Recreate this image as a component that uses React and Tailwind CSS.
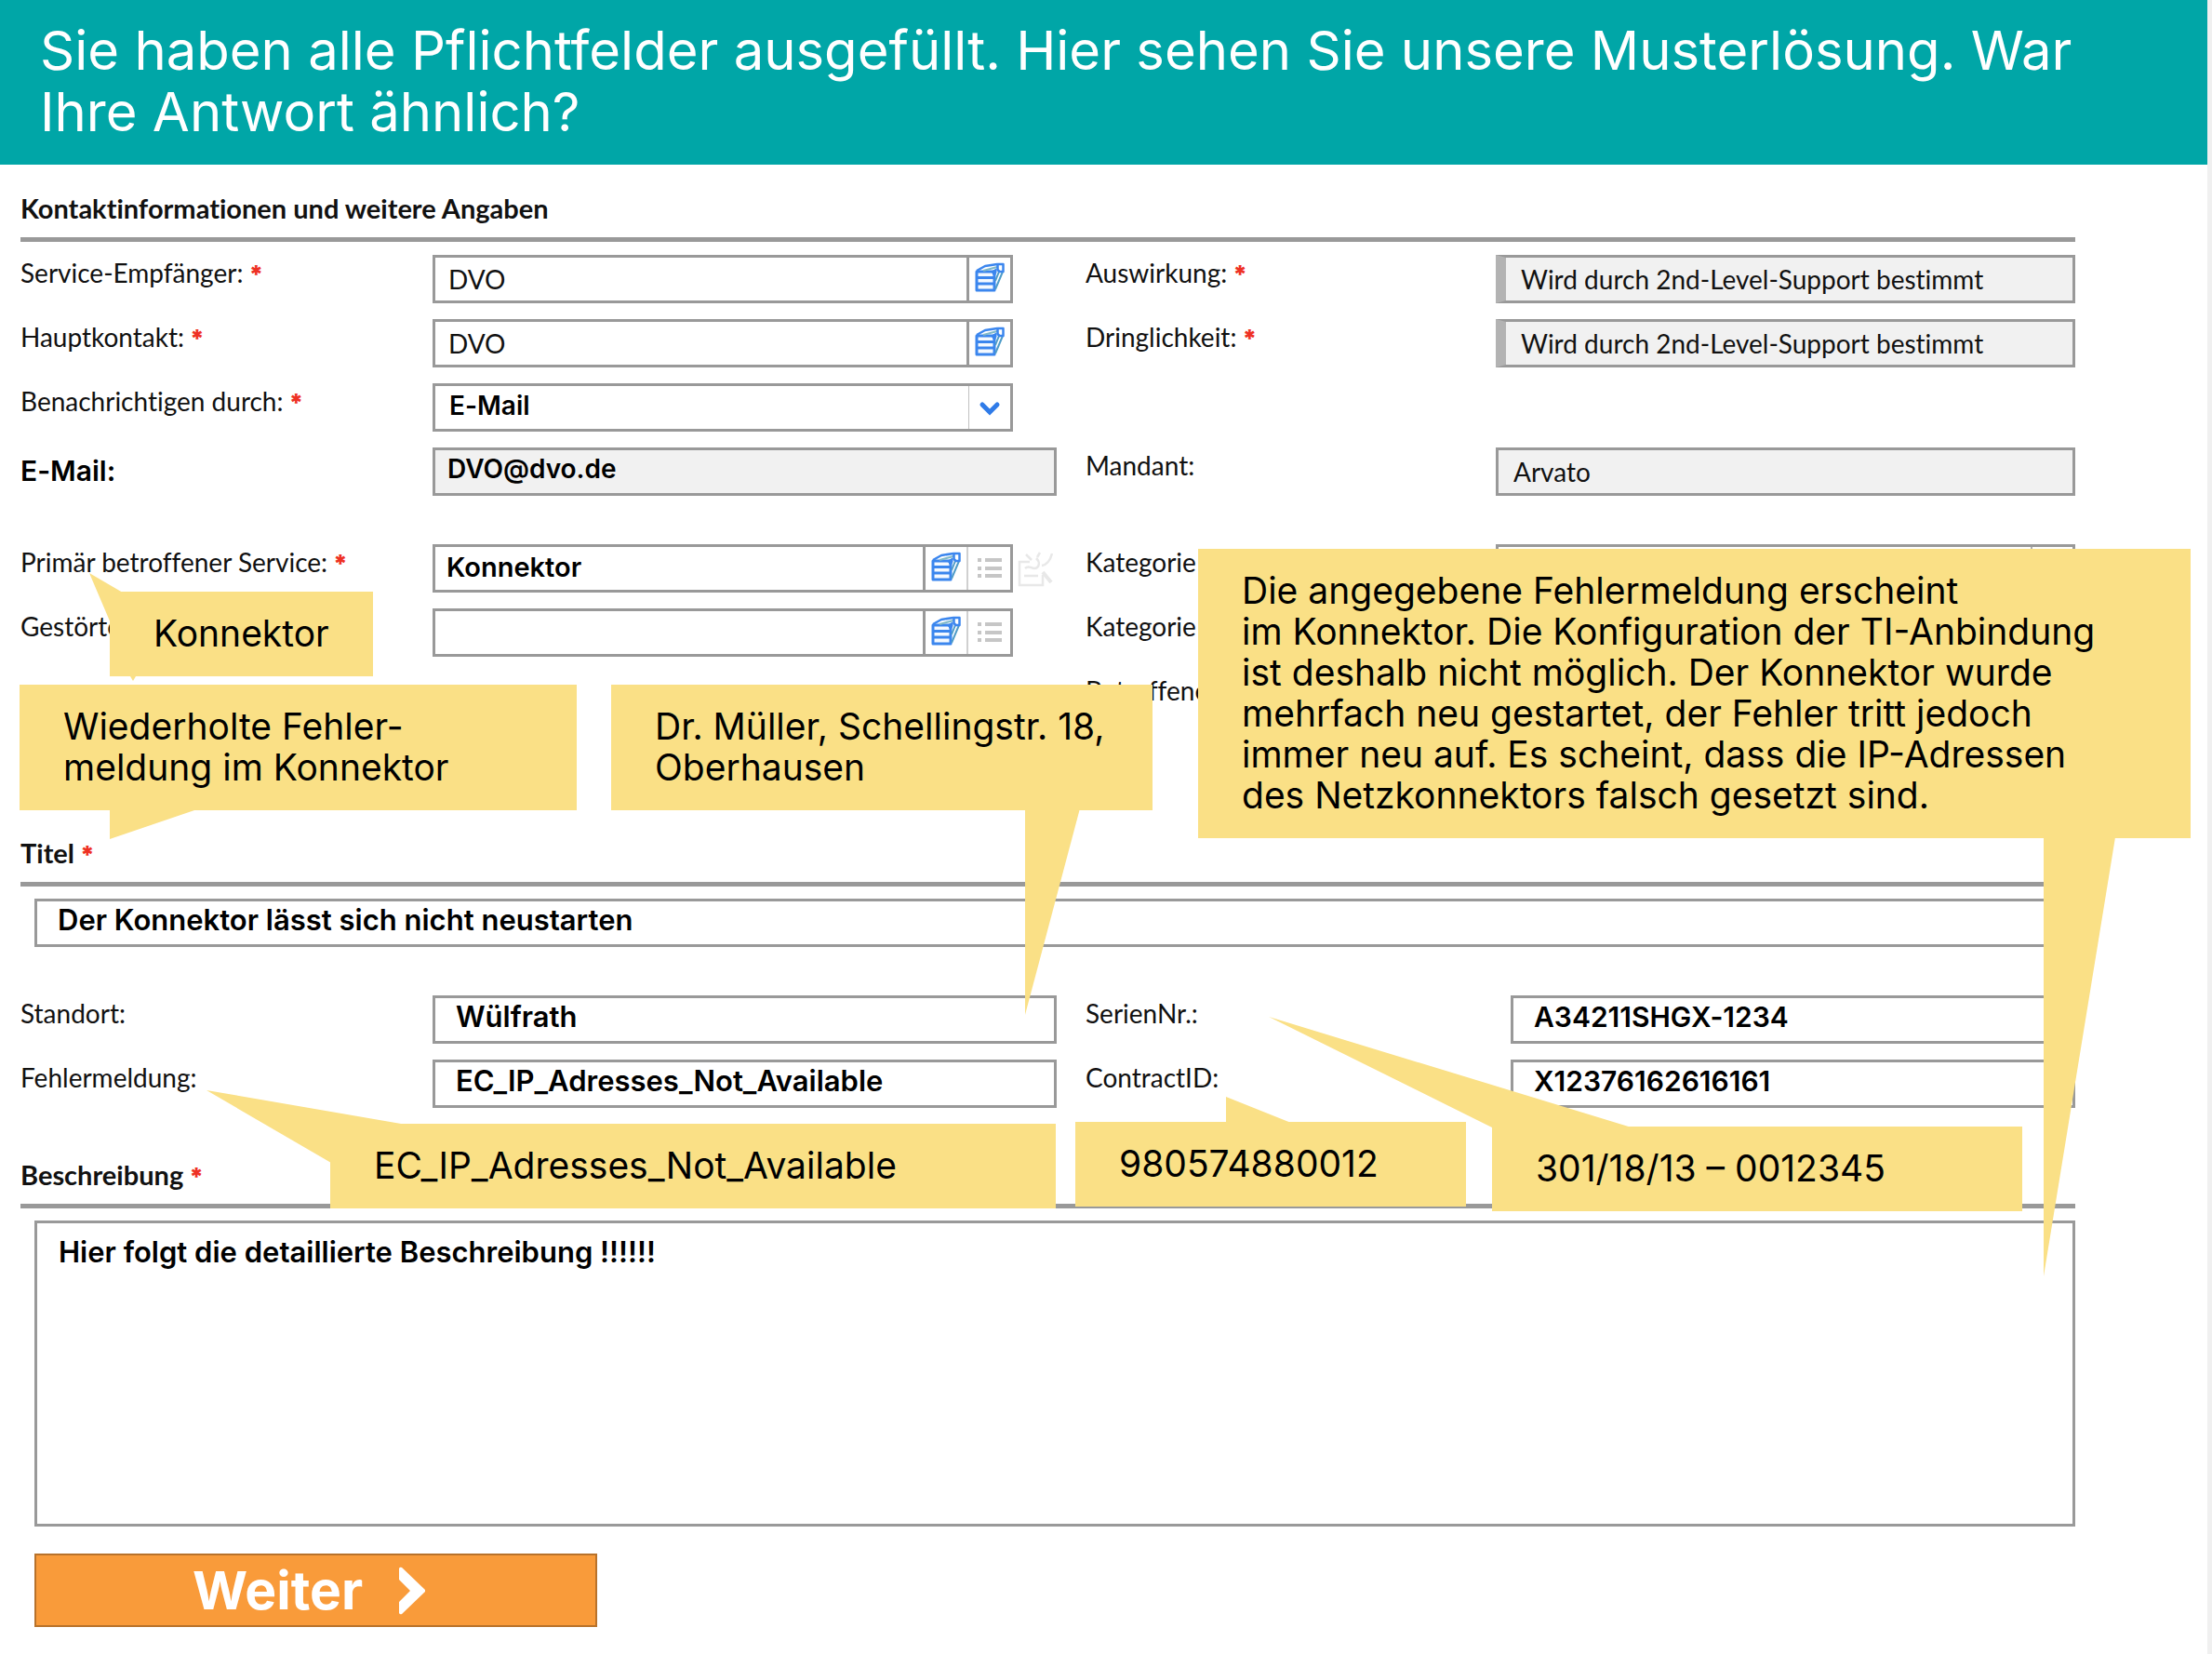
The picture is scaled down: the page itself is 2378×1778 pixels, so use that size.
import React from "react";

const FORM_FONT = "font-['Lato',sans-serif] [font-variant-ligatures:none]";
const VALUE_FONT = "font-['Inter',sans-serif] font-semibold";

function StackIcon() {
  return (
    <svg width="32" height="32" viewBox="0 0 32 32" fill="none" stroke="#3b86ee" strokeWidth="3" strokeLinejoin="round" aria-hidden="true">
      <path d="M2 10h19v20H2z" fill="#f4f9ff" />
      <path d="M2 16.500h19M2 23h19" />
      <path d="M2 9l9-5 13-2" strokeWidth="2.500" />
      <path d="M9 9l15-4" stroke="#7fb8c8" strokeWidth="2" />
      <path d="M22 29l8-19M22 20l4-10" stroke="#4f9cc8" strokeWidth="2" />
      <path d="M24.500 2h6v8h-4l-2-2z" strokeWidth="2.500" />
      <path d="M18 10l5-3v4l-2 4z" fill="#3b86ee" strokeWidth="1" />
    </svg>
  );
}

function ListIcon() {
  return (
    <svg width="26" height="22" viewBox="0 0 26 22" fill="#c6c6c6" aria-hidden="true">
      <path d="M0 0h4v4H0zM8 0h18v4H8zM0 9h4v4H0zM8 9h18v4H8zM0 17h4v4H0zM8 17h18v4H8z" />
    </svg>
  );
}

function EditIcon() {
  return (
    <svg width="38" height="38" viewBox="0 0 38 38" fill="none" stroke="#e8e8e8" strokeWidth="2.500" aria-hidden="true">
      <path d="M13 11H2v25h25V25M7 26h15" />
      <path d="M8 18c5-5 8 3 13-1 3-3 2-7-1-10M9 3l6 6M24 1l-3 5M26 15c6-1 9-5 11-13" />
      <path d="M27 22l9 11" strokeWidth="4" />
    </svg>
  );
}

function Star() {
  return <span className="ml-1.5 font-['Inter',sans-serif] text-[26px] font-black leading-none text-[#ee3124]">*</span>;
}

function Label({ htmlFor, required, right, strong, children }) {
  return (
    <label
      htmlFor={htmlFor}
      className={`${right ? "pl-[31px]" : ""} ${
        strong ? `${VALUE_FONT} pt-2 text-[30px] text-black` : "pt-0.5 text-[28px] text-[#111111]"
      } whitespace-nowrap leading-[34px]`}
    >
      {children}
      {required && <Star />}
    </label>
  );
}

function Row({ children }) {
  return <div className="grid h-[69px] grid-cols-[443fr_671fr_472fr_623fr] items-start">{children}</div>;
}

const BOX = "flex h-[52px] min-w-0 flex-1 items-stretch border-[3px] border-[#999999]";

function Lookup({ id, value, list, edit, form }) {
  return (
    <div className="flex">
      <div className={`${BOX} bg-white`}>
        <input
          id={id}
          defaultValue={value}
          className={`min-w-0 flex-1 bg-transparent outline-none ${
            form ? "pl-3.5 text-[28px] text-[#111111]" : `${VALUE_FONT} pb-0.5 pl-3 text-[29px] text-black`
          }`}
        />
        <button type="button" aria-label="Auswählen" className="flex w-[47px] items-center justify-center border-l-[3px] border-[#999999] pb-1">
          <StackIcon />
        </button>
        {list && (
          <button type="button" aria-label="Liste" className="flex w-[47px] items-center justify-center border-l-2 border-[#d0d0d0]">
            <ListIcon />
          </button>
        )}
      </div>
      <div className="flex w-[47px] items-start justify-center pt-2">
        {edit && (
          <button type="button" aria-label="Bearbeiten">
            <EditIcon />
          </button>
        )}
      </div>
    </div>
  );
}

function Chevron() {
  return (
    <svg className="pointer-events-none absolute right-2.5 top-4" width="24" height="16" viewBox="0 0 24 16" fill="none" stroke="#2f7be8" strokeWidth="5" strokeLinecap="round" aria-hidden="true">
      <path d="M4 4l8 8 8-8" />
    </svg>
  );
}

function ReadOnly({ id, value, bar }) {
  return (
    <div className={`${BOX} bg-[#f1f1f1] ${bar ? "border-l-[11px] border-l-[#b3b3b3]" : ""}`}>
      <input id={id} readOnly defaultValue={value} className="min-w-0 flex-1 bg-transparent pl-4 text-[28px] text-[#111111] outline-none" />
    </div>
  );
}

function TextField({ id, value, grey, inset = "pl-[22px]", size = "text-[31px]", className = "" }) {
  return (
    <div className={`${BOX} ${grey ? "bg-[#f1f1f1]" : "bg-white"} ${className}`}>
      <input id={id} defaultValue={value} className={`${VALUE_FONT} ${inset} ${size} min-w-0 flex-1 bg-transparent pb-1.5 text-black outline-none`} />
    </div>
  );
}

function Callout({ className, points, children }) {
  return (
    <div className={`absolute ${className}`}>
      <svg className="absolute left-0 top-0 overflow-visible" width="1" height="1" fill="#fae086" aria-hidden="true">
        <polygon points={points} />
      </svg>
      <p className="relative whitespace-nowrap bg-[#fae086] pb-6 pl-[47px] pt-[23px] text-[39px] leading-[44px] text-black">{children}</p>
    </div>
  );
}

export default function App() {
  return (
    <div className="relative min-h-screen border-r-[5px] border-[#f0f0f0] bg-white font-['Inter',sans-serif]">
      <header className="bg-[#00a6a7] pb-6 pl-[43px] pr-[120px] pt-[21px]">
        <h1 className="text-[58px] leading-[66px] text-white">
          Sie haben alle Pflichtfelder ausgefüllt. Hier sehen Sie unsere Musterlösung. War Ihre Antwort ähnlich?
        </h1>
      </header>

      <form className={`${FORM_FONT} ml-[22px] mr-[142px]`} onSubmit={(e) => e.preventDefault()}>
        <h2 className="mb-3.5 border-b-[5px] border-[#999999] pb-[14px] pt-[30px] text-[29px] font-bold leading-[34px] text-[#111111]">
          Kontaktinformationen und weitere Angaben
        </h2>

        <Row>
          <Label htmlFor="empf" required>Service-Empfänger:</Label>
          <Lookup id="empf" value="DVO" form />
          <Label htmlFor="ausw" required right>Auswirkung:</Label>
          <ReadOnly id="ausw" value="Wird durch 2nd-Level-Support bestimmt" bar />
        </Row>
        <Row>
          <Label htmlFor="haupt" required>Hauptkontakt:</Label>
          <Lookup id="haupt" value="DVO" form />
          <Label htmlFor="dring" required right>Dringlichkeit:</Label>
          <ReadOnly id="dring" value="Wird durch 2nd-Level-Support bestimmt" bar />
        </Row>
        <Row>
          <Label htmlFor="benach" required>Benachrichtigen durch:</Label>
          <div className={`${BOX} relative mr-[47px] bg-white`}>
            <select id="benach" className={`${VALUE_FONT} min-w-0 flex-1 appearance-none bg-transparent pb-1.5 pl-[15px] text-[28px] text-black outline-none`}>
              <option>E-Mail</option>
            </select>
            <span className="w-[45px] border-l border-[#c0c0c0]" />
            <Chevron />
          </div>
        </Row>
        <Row>
          <Label htmlFor="mail" strong>E-Mail:</Label>
          <TextField id="mail" value="DVO@dvo.de" grey inset="pl-[13px]" size="text-[28px]" />
          <Label htmlFor="mandant" right>Mandant:</Label>
          <ReadOnly id="mandant" value="Arvato" />
        </Row>

        <div className="mt-[35px]">
          <Row>
            <Label htmlFor="service" required>Primär betroffener Service:</Label>
            <Lookup id="service" value="Konnektor" list edit />
            <Label htmlFor="kat1" right>Kategorie</Label>
            <div className={`${BOX} bg-white`}>
              <select id="kat1" className="min-w-0 flex-1 appearance-none bg-transparent outline-none" />
              <span className="w-[45px] border-l-2 border-[#b0b0b0]" />
            </div>
          </Row>
          <Row>
            <Label htmlFor="geraet">Gestörte</Label>
            <Lookup id="geraet" value="" list />
            <Label htmlFor="kat2" right>Kategorie</Label>
            <div className={`${BOX} bg-white`}>
              <select id="kat2" className="min-w-0 flex-1 appearance-none bg-transparent outline-none" />
            </div>
          </Row>
          <Row>
            <span />
            <span />
            <Label htmlFor="betr" right>Betroffene</Label>
            <div className={`${BOX} bg-white`}>
              <input id="betr" className="min-w-0 flex-1 bg-transparent outline-none" />
            </div>
          </Row>
        </div>

        <h2 className="mb-[13px] border-b-[5px] border-[#999999] pb-[14px] pt-[108px] text-[29px] font-bold leading-[34px] text-[#111111]">
          <label htmlFor="titel">Titel<Star /></label>
        </h2>
        <div className="flex pl-[15px]">
          <TextField id="titel" value="Der Konnektor lässt sich nicht neustarten" />
        </div>

        <div className="mt-[52px]">
          <Row>
            <Label htmlFor="standort">Standort:</Label>
            <TextField id="standort" value="Wülfrath" />
            <Label htmlFor="serie" right>SerienNr.:</Label>
            <TextField id="serie" value="A34211SHGX-1234" size="text-[30px]" className="ml-4" />
          </Row>
          <Row>
            <Label htmlFor="fehler">Fehlermeldung:</Label>
            <TextField id="fehler" value="EC_IP_Adresses_Not_Available" />
            <Label htmlFor="contract" right>ContractID:</Label>
            <TextField id="contract" value="X12376162616161" size="text-[30px]" className="ml-4" />
          </Row>
        </div>

        <h2 className="mb-[13px] border-b-[5px] border-[#999999] pb-[14px] pt-[38px] text-[29px] font-bold leading-[34px] text-[#111111]">
          <label htmlFor="beschreibung">Beschreibung<Star /></label>
        </h2>
        <div className="pl-[15px]">
          <textarea
            id="beschreibung"
            defaultValue="Hier folgt die detaillierte Beschreibung !!!!!!"
            className={`${VALUE_FONT} block h-[329px] w-full resize-none border-[3px] border-[#999999] bg-white px-[23px] py-[13px] text-[31px] leading-[36px] text-black outline-none`}
          />
          <button
            type="button"
            className="mt-[29px] flex h-[79px] w-[605px] items-center gap-[38px] border-2 border-[#b8722b] bg-[#f99b3a] pl-[168px] font-['Inter',sans-serif] text-[57px] font-bold leading-none text-white"
          >
            Weiter
            <svg width="30" height="52" viewBox="0 0 30 52" fill="#ffffff" aria-hidden="true">
              <path d="M1 2Q2 0 4 1L29 25V27L4 51Q2 52 1 50V38L13 26L1 14Z" />
            </svg>
          </button>
        </div>
      </form>

      <Callout className="left-[657px] top-[736px] w-[582px]" points="445,133 504,133 445,355">
        Dr. Müller, Schellingstr. 18,<br />Oberhausen
      </Callout>
      <Callout className="left-[118px] top-[636px] w-[283px]" points="-22,-20 14,1 28,91 25,96 22,91 1,34">
        Konnektor
      </Callout>
      <Callout className="left-[21px] top-[736px] w-[599px]" points="97,134 191,134 97,166">
        Wiederholte Fehler-<br />meldung im Konnektor
      </Callout>
      <Callout className="left-[1288px] top-[590px] w-[1067px]" points="909,310 986,310 909,782">
        Die angegebene Fehlermeldung erscheint<br />
        im Konnektor. Die Konfiguration der TI-Anbindung<br />
        ist deshalb nicht möglich. Der Konnektor wurde<br />
        mehrfach neu gestartet, der Fehler tritt jedoch<br />
        immer neu auf. Es scheint, dass die IP-Adressen<br />
        des Netzkonnektors falsch gesetzt sind.
      </Callout>
      <Callout className="left-[355px] top-[1208px] w-[780px]" points="-133,-36 82,1 1,42">
        EC_IP_Adresses_Not_Available
      </Callout>
      <Callout className="left-[1156px] top-[1206px] w-[420px]" points="162,-27 232,1 162,1">
        980574880012
      </Callout>
      <Callout className="left-[1604px] top-[1211px] w-[570px]" points="-240,-118 150,1 0,1">
        301/18/13 – 0012345
      </Callout>
    </div>
  );
}
